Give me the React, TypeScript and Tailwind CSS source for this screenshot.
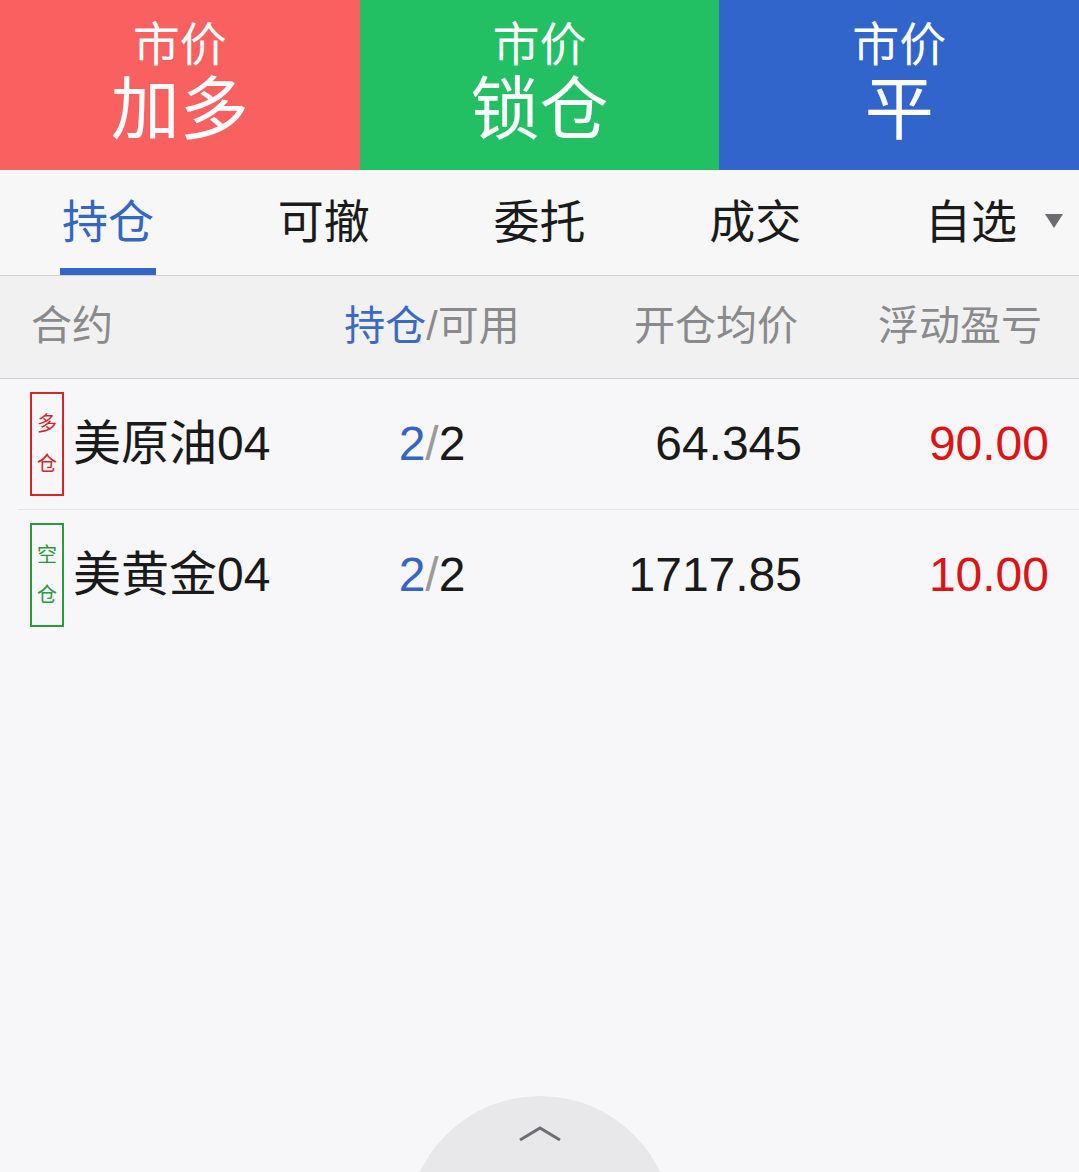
import React from "react";

const font = { fontFamily: '"Liberation Sans", "Noto Sans CJK SC", sans-serif' };

const actions = [
  { top: "市价", main: "加多", bg: "bg-[#f96161]" },
  { top: "市价", main: "锁仓", bg: "bg-[#22bf63]" },
  { top: "市价", main: "平", bg: "bg-[#3265cc]" },
];

const tabs = ["持仓", "可撤", "委托", "成交", "自选"];

const rows = [
  { side: "多", color: "red", name: "美原油04", avg: "64.345", pnl: "90.00" },
  { side: "空", color: "green", name: "美黄金04", avg: "1717.85", pnl: "10.00" },
];

export default function App() {
  return (
    <div className="relative h-[1172px] w-[1079px] overflow-hidden bg-[#f7f7f9]" style={font}>
      {/* action buttons */}
      <div className="grid h-[170px] grid-cols-3">
        {actions.map((a) => (
          <div key={a.main} className={`flex flex-col items-center justify-center text-white ${a.bg}`}>
            <div className="mt-[2px] text-[47px] leading-[50px]">{a.top}</div>
            <div className="text-[69px] leading-[82px]">{a.main}</div>
          </div>
        ))}
      </div>

      {/* tabs */}
      <div className="grid h-[106px] grid-cols-5 border-b border-[#cfcfd1] bg-[#f7f7f7]">
        {tabs.map((t, i) => (
          <div key={t} className="relative flex items-center justify-center">
            <span className={`text-[46px] ${i === 0 ? "text-[#3466c4]" : "text-[#1b1b1b]"}`}>{t}</span>
            {i === 4 && (
              <svg className="absolute right-[16px] top-[44px]" width="18" height="14" viewBox="0 0 18 14">
                <path d="M0 0 H18 L9 14 Z" fill="#6b6b70" />
              </svg>
            )}
            {i === 0 && <div className="absolute bottom-0 left-[60px] h-[7px] w-[96px] bg-[#3366c8]" />}
          </div>
        ))}
      </div>

      {/* column header */}
      <div className="grid h-[103px] grid-cols-[330px_204px_268px_1fr] items-center border-b border-[#cfcfd1] bg-[#f1f1f2] text-[41px] text-[#8a8a8d]">
        <div className="pl-[31px]">合约</div>
        <div className="text-center">
          <span className="text-[#3a6bc4]">持仓</span>/可用
        </div>
        <div className="pr-[4px] text-right">开仓均价</div>
        <div className="pr-[37px] text-right">浮动盈亏</div>
      </div>

      {/* rows */}
      <div className="flex flex-col">
        {rows.map((r, i) => (
          <div key={r.name} className={`ml-[18px] ${i === 0 ? "border-b border-[#e6e6e9]" : ""}`}>
            <div className="-ml-[18px] grid h-[130px] grid-cols-[330px_204px_268px_1fr] items-center">
              <div className="flex items-center pl-[30px]">
                <div
                  className={`flex h-[104px] w-[34px] flex-col items-center justify-center gap-[18px] border-2 text-[20px] leading-[22px] ${
                    r.color === "red" ? "border-[#d4252a] text-[#d4252a]" : "border-[#2a9a3f] text-[#2a9a3f]"
                  }`}
                >
                  <span>{r.side}</span>
                  <span>仓</span>
                </div>
                <span className="ml-[9px] text-[48px] text-[#1a1a1a]">{r.name}</span>
              </div>
              <div className="text-center text-[48px] text-[#1a1a1a]">
                <span className="text-[#3466c4]">2</span>
                <span className="text-[#9a9a9a]">/</span>2
              </div>
              <div className="text-right text-[48px] text-[#1a1a1a]">{r.avg}</div>
              <div className="pr-[30px] text-right text-[48px] text-[#dd1414]">{r.pnl}</div>
            </div>
          </div>
        ))}
      </div>

      {/* bottom pull-up handle */}
      <div className="absolute left-[407px] top-[1096px] flex h-[266px] w-[266px] justify-center rounded-full bg-[#e8e8ea]">
        <svg className="mt-[30px]" width="44" height="16" viewBox="0 0 44 16">
          <path d="M2 14 L22 2 L42 14" fill="none" stroke="#6e6e72" strokeWidth="3" />
        </svg>
      </div>
    </div>
  );
}
